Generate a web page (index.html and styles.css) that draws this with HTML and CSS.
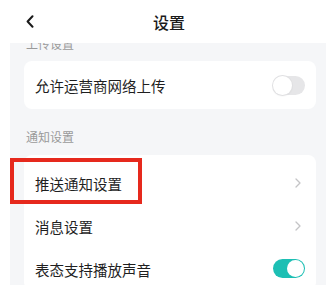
FILE: index.html
```html
<!DOCTYPE html>
<html lang="zh">
<head>
<meta charset="utf-8">
<link rel="stylesheet" href="styles.css">
</head>
<body>
<div class="page">
  <header class="topbar">
    <span class="back"><svg width="8" height="13" viewBox="0 0 8 13"><path d="M6.5 1.2 L1.6 6.5 L6.5 11.8" fill="none" stroke="#1a1a1a" stroke-width="2" stroke-linecap="round" stroke-linejoin="round"/></svg></span>
    <h1 class="title">设置</h1>
  </header>
  <main class="content">
    <div class="section-label first">上传设置</div>
    <div class="card">
      <div class="row">
        <span class="row-text">允许运营商网络上传</span>
        <span class="switch"><span class="knob"></span></span>
      </div>
    </div>
    <div class="section-label">通知设置</div>
    <div class="card card-list">
      <div class="row row-mark">
        <span class="row-text">推送通知设置</span>
        <span class="chev"><svg width="6" height="10" viewBox="0 0 6 10"><path d="M1 1 L5 5 L1 9" fill="none" stroke="#c4c4c6" stroke-width="1.3" stroke-linecap="round" stroke-linejoin="round"/></svg></span>
        <span class="highlight"></span>
      </div>
      <div class="row">
        <span class="row-text">消息设置</span>
        <span class="chev"><svg width="6" height="10" viewBox="0 0 6 10"><path d="M1 1 L5 5 L1 9" fill="none" stroke="#c4c4c6" stroke-width="1.3" stroke-linecap="round" stroke-linejoin="round"/></svg></span>
      </div>
      <div class="row">
        <span class="row-text">表态支持播放声音</span>
        <span class="switch on"><span class="knob"></span></span>
      </div>
    </div>
  </main>
</div>
</body>
</html>
```

FILE: styles.css
```css
* { box-sizing: border-box; }
html, body { margin: 0; padding: 0; background: #ffffff; }
body {
  width: 334px;
  height: 285px;
  overflow: hidden;
  font-family: "Noto Sans CJK SC", "Noto Sans", sans-serif;
  color: #1f1f1f;
}
.page { display: flex; flex-direction: column; height: 285px; }
.topbar {
  position: relative;
  height: 43px;
  flex: none;
  display: flex;
  align-items: center;
  justify-content: center;
  background: #ffffff;
  z-index: 2;
}
.back {
  position: absolute;
  left: 26px;
  top: 15px;
  display: flex;
}
.title {
  margin: 0;
  font-size: 16px;
  font-weight: 500;
  line-height: 20px;
  color: #1a1a1a;
  padding-left: 4px;
}
.content {
  flex: 1;
  margin: 0 8px 0 10px;
  padding: 0 10px 0 14px;
  background: #f5f6f8;
  overflow: hidden;
}
.section-label {
  font-size: 12px;
  line-height: 14px;
  height: 14px;
  color: #9a9a9a;
  padding-left: 2px;
  margin-top: 21px;
}
.section-label.first { margin-top: -6px; }
.card {
  background: #ffffff;
  border-radius: 8px;
  margin-top: 10px;
}
.card-list { margin-top: 11px; padding-top: 6px; }
.card > .row:only-child { height: 48px; }
.row {
  position: relative;
  height: 43px;
  display: flex;
  align-items: center;
  justify-content: space-between;
  padding: 0 11px 0 11px;
}
.row-text {
  font-size: 14.5px;
  line-height: 20px;
  color: #1f1f1f;
  padding-top: 2px;
}
.chev {
  display: flex;
  padding-right: 4px;
}
.switch {
  position: relative;
  width: 32px;
  height: 19px;
  border-radius: 10px;
  background: #e6e6e8;
}
.switch .knob {
  position: absolute;
  left: 0;
  top: 0;
  width: 19px;
  height: 19px;
  border-radius: 50%;
  background: #ffffff;
  box-shadow: 0 0 0 1px #e0e0e2, 0 1px 2px rgba(0,0,0,0.08);
}
.switch.on { background: #1dbfb4; }
.switch.on .knob {
  left: auto;
  right: 1px;
  top: 1px;
  width: 17px;
  height: 17px;
  box-shadow: none;
}
.highlight {
  position: absolute;
  left: -14px;
  top: -3px;
  width: 132px;
  height: 46px;
  border: 4px solid #e6291d;
}
```
